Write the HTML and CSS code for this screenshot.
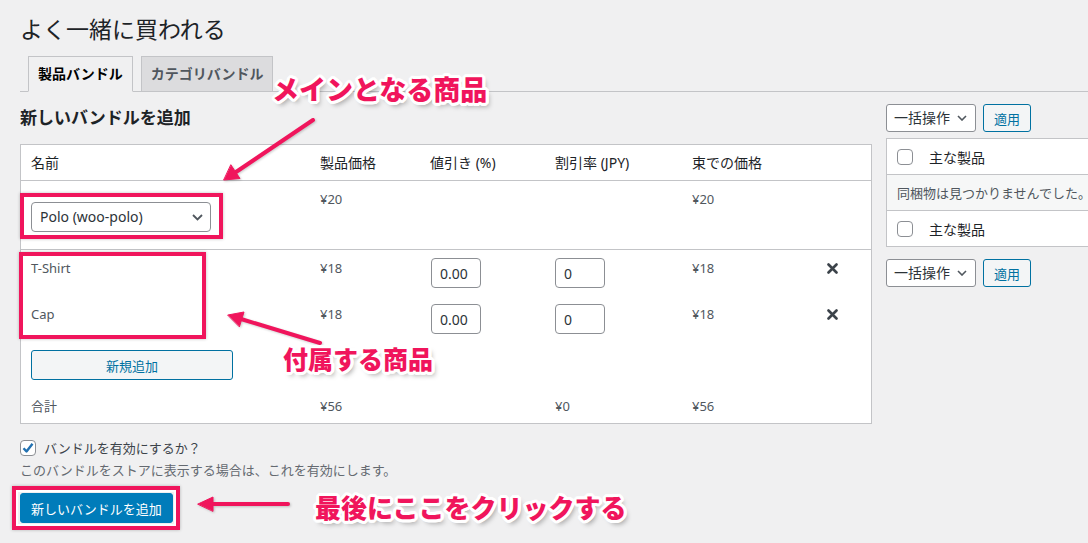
FILE: index.html
```html
<!DOCTYPE html>
<html lang="ja">
<head>
<meta charset="utf-8">
<title>よく一緒に買われる</title>
<link rel="stylesheet" href="styles.css">
</head>
<body>
<div class="page">
  <h1 class="title">よく一緒に買われる</h1>
  <nav class="tabs">
    <span class="tab active">製品バンドル</span>
    <span class="tab">カテゴリバンドル</span>
  </nav>
  <div class="cols">
    <div class="main">
      <h2 class="heading">新しいバンドルを追加</h2>
      <table class="bundle">
        <colgroup>
          <col class="c1"><col class="c2"><col class="c3"><col class="c4"><col class="c5"><col class="c6">
        </colgroup>
        <thead>
          <tr><th>名前</th><th>製品価格</th><th>値引き (%)</th><th>割引率 (JPY)</th><th>束での価格</th><th></th></tr>
        </thead>
        <tbody>
          <tr class="r-main">
            <td class="sel-cell"><div class="select"><span>Polo (woo-polo)</span><svg class="chev" width="11" height="7" viewBox="0 0 11 7"><path d="M1 1l4.5 4.5L10 1" fill="none" stroke="#50575e" stroke-width="1.8"/></svg></div></td>
            <td>¥20</td><td></td><td></td><td>¥20</td><td></td>
          </tr>
          <tr class="r-item">
            <td>T-Shirt</td><td>¥18</td>
            <td><input class="num n1" value="0.00"></td>
            <td><input class="num" value="0"></td>
            <td>¥18</td>
            <td><svg class="x" width="11" height="11" viewBox="0 0 11 11"><path d="M1.5 1.5l8 8M9.5 1.5l-8 8" stroke="#3c434a" stroke-width="2.6" stroke-linecap="round"/></svg></td>
          </tr>
          <tr class="r-item">
            <td>Cap</td><td>¥18</td>
            <td><input class="num n1" value="0.00"></td>
            <td><input class="num" value="0"></td>
            <td>¥18</td>
            <td><svg class="x" width="11" height="11" viewBox="0 0 11 11"><path d="M1.5 1.5l8 8M9.5 1.5l-8 8" stroke="#3c434a" stroke-width="2.6" stroke-linecap="round"/></svg></td>
          </tr>
          <tr class="r-add">
            <td colspan="6"><button class="btn-sec add">新規追加</button></td>
          </tr>
          <tr class="r-total">
            <td>合計</td><td>¥56</td><td></td><td>¥0</td><td>¥56</td><td></td>
          </tr>
        </tbody>
      </table>
      <label class="enable"><span class="cb"><svg width="14" height="14" viewBox="0 0 14 14"><path d="M2.5 7.2l3 3.2 6-7.6" fill="none" stroke="#2271b1" stroke-width="2.4" stroke-linejoin="round"/></svg></span>バンドルを有効にするか？</label>
      <p class="desc">このバンドルをストアに表示する場合は、これを有効にします。</p>
      <button class="primary">新しいバンドルを追加</button>
    </div>
    <div class="side">
      <div class="bulk">
        <div class="select small"><span>一括操作</span><svg class="chev" width="10" height="6" viewBox="0 0 10 6"><path d="M1 1l4 4 4-4" fill="none" stroke="#50575e" stroke-width="1.6"/></svg></div>
        <button class="btn-sec apply">適用</button>
      </div>
      <div class="list">
        <div class="lrow"><span class="cb empty"></span><span class="lbl">主な製品</span></div>
        <div class="lrow none">同梱物は見つかりませんでした。</div>
        <div class="lrow"><span class="cb empty"></span><span class="lbl">主な製品</span></div>
      </div>
      <div class="bulk bottom">
        <div class="select small"><span>一括操作</span><svg class="chev" width="10" height="6" viewBox="0 0 10 6"><path d="M1 1l4 4 4-4" fill="none" stroke="#50575e" stroke-width="1.6"/></svg></div>
        <button class="btn-sec apply">適用</button>
      </div>
    </div>
  </div>

  <div class="box b1"></div>
  <div class="box b2"></div>
  <div class="box b3"></div>
  <svg class="arrows" width="1088" height="543" viewBox="0 0 1088 543">
    <g fill="#f0155c" stroke="#f0155c" stroke-width="4" stroke-linecap="round">
      <line x1="313" y1="120" x2="236" y2="172"/>
      <polygon points="224,180 240,178.5 231,165" stroke-width="1" stroke-linejoin="round"/>
      <line x1="320" y1="343" x2="241" y2="319"/>
      <polygon points="228,315 244,312 239.5,326.5" stroke-width="1" stroke-linejoin="round"/>
      <line x1="288" y1="504" x2="211" y2="504"/>
      <polygon points="198,504 213,497 213,511" stroke-width="1" stroke-linejoin="round"/>
    </g>
  </svg>
  <div class="note n-main">メインとなる商品</div>
  <div class="note n-sub">付属する商品</div>
  <div class="note n-click">最後にここをクリックする</div>
</div>
</body>
</html>
```
FILE: styles.css
```css
body {
  margin: 0;
  background: #f0f0f1;
  font-family: "Noto Sans", "Noto Sans CJK JP", sans-serif;
  font-size: 13px;
  color: #3c434a;
}
.page {
  position: relative;
  height: 543px;
  overflow: hidden;
  padding-left: 20px;
}
.title {
  margin: 0;
  padding-top: 14px;
  font-size: 23px;
  line-height: 30px;
  font-weight: 400;
  color: #1d2327;
}
.tabs {
  display: flex;
  gap: 8px;
  margin-top: 12px;
  padding-left: 8px;
  border-bottom: 1px solid #c3c4c7;
}
.tab {
  border: 1px solid #c3c4c7;
  padding: 5px 9px;
  line-height: 24px;
  font-size: 14px;
  font-weight: 700;
  background: #dcdcde;
  color: #50575e;
  margin-bottom: -1px;
}
.tab.active {
  background: #f0f0f1;
  border-bottom-color: #f0f0f1;
  color: #000;
}
.cols {
  display: flex;
  gap: 14px;
  margin-top: 12px;
}
.main { width: 852px; flex: none; }
.side { width: 300px; flex: none; }
.heading {
  margin: 2px 0 14px;
  font-size: 17px;
  line-height: 24px;
  font-weight: 700;
  color: #1d2327;
}
.bundle {
  width: 852px;
  box-sizing: border-box;
  table-layout: fixed;
  border-collapse: separate;
  border-spacing: 0;
  border: 1px solid #c3c4c7;
  background: #fff;
}
.c1 { width: 289px; }
.c2 { width: 110px; }
.c3 { width: 125px; }
.c4 { width: 137px; }
.c5 { width: 135px; }
.c6 { width: 54px; }
.bundle th {
  text-align: left;
  font-weight: 400;
  font-size: 14px;
  line-height: 19px;
  padding: 8px 10px;
  color: #1d2327;
  border-bottom: 1px solid #c3c4c7;
}
.bundle td {
  vertical-align: top;
  padding: 8px 10px;
  line-height: 20px;
  color: #50575e;
}
.r-main td {
  border-bottom: 1px solid #c3c4c7;
  padding-bottom: 17px;
}
.r-main td.sel-cell { padding-bottom: 17px; }
.r-item td { line-height: 20px; height: 30px; }
.r-total td { padding-bottom: 7px; }
.select {
  display: flex;
  align-items: center;
  justify-content: space-between;
  box-sizing: border-box;
  width: 180px;
  height: 30px;
  margin-top: 13px;
  padding: 0 7px 0 8px;
  border: 1px solid #8c8f94;
  border-radius: 4px;
  background: #fff;
  font-size: 14px;
  line-height: 20px;
  color: #2c3338;
}
.select.small {
  width: 90px;
  height: 28px;
  margin-top: 0;
  padding: 0 8px 0 7px;
  border-radius: 3px;
}
.num {
  display: block;
  box-sizing: border-box;
  width: 50px;
  height: 30px;
  padding: 0 8px;
  border: 1px solid #8c8f94;
  border-radius: 4px;
  background: #fff;
  font-family: inherit;
  font-size: 14px;
  color: #2c3338;
}
.num.n1 { margin-left: 1px; }
.x { display: block; margin-top: 5px; }
.btn-sec {
  box-sizing: border-box;
  border: 1px solid #0071a1;
  background: #f3f5f6;
  color: #0071a1;
  border-radius: 3px;
  font-family: inherit;
  font-size: 13px;
  padding: 0;
}
.add { display: block; width: 202px; height: 30px; }
.apply { width: 48px; height: 28px; }
.enable {
  display: flex;
  align-items: center;
  gap: 8px;
  height: 16px;
  margin-top: 16px;
  line-height: 16px;
  color: #3c434a;
}
.cb {
  display: inline-flex;
  align-items: center;
  justify-content: center;
  flex: none;
  box-sizing: border-box;
  width: 16px;
  height: 16px;
  border: 1px solid #8c8f94;
  border-radius: 4px;
  background: #fff;
}
.desc {
  margin: 4px 0 0;
  line-height: 20px;
  color: #646970;
}
.primary {
  display: block;
  box-sizing: border-box;
  height: 30px;
  margin-top: 13px;
  padding: 0 10px;
  border: 1px solid #007cba;
  border-radius: 3px;
  background: #007cba;
  color: #fff;
  font-family: inherit;
  font-size: 13px;
}
.bulk {
  display: flex;
  gap: 7px;
  align-items: center;
}
.bulk.bottom { margin-top: 12px; }
.list {
  margin-top: 6px;
  border: 1px solid #c3c4c7;
  background: #fff;
}
.lrow {
  display: flex;
  align-items: center;
  height: 35px;
  padding-left: 10px;
  font-size: 14px;
  color: #1d2327;
}
.lrow + .lrow { border-top: 1px solid #c3c4c7; }
.lrow .lbl { margin-left: 16px; }
.lrow.none {
  background: #f6f7f7;
  font-size: 13px;
  color: #50575e;
  white-space: nowrap;
}

/* annotations */
.box {
  position: absolute;
  box-sizing: border-box;
  border: 4px solid #f0155c;
  box-shadow: inset 0 0 0 2px #fff, 0 0 3px rgba(0,0,0,.25);
}
.b1 { left: 20px; top: 193px; width: 203px; height: 46px; }
.b2 { left: 19px; top: 252px; width: 187px; height: 87px; }
.b3 { left: 12px; top: 486px; width: 168px; height: 44px; }
.arrows {
  position: absolute;
  left: 0;
  top: 0;
  pointer-events: none;
  filter: drop-shadow(1px 1px 1px rgba(0,0,0,.2));
}
.note {
  position: absolute;
  white-space: nowrap;
  font-family: "Noto Sans CJK JP", sans-serif;
  font-weight: 900;
  line-height: 1;
  color: #f0155c;
  text-shadow:
    3px 0 0 #fff, -3px 0 0 #fff, 0 3px 0 #fff, 0 -3px 0 #fff,
    2px 2px 0 #fff, -2px 2px 0 #fff, 2px -2px 0 #fff, -2px -2px 0 #fff,
    3px 1px 0 #fff, -3px 1px 0 #fff, 3px -1px 0 #fff, -3px -1px 0 #fff,
    1px 3px 0 #fff, -1px 3px 0 #fff, 1px -3px 0 #fff, -1px -3px 0 #fff,
    3px 4px 5px rgba(0,0,0,.35);
}
.n-main { left: 272px; top: 75px; font-size: 27px; }
.n-sub { left: 283px; top: 346px; font-size: 25px; }
.n-click { left: 315px; top: 494px; font-size: 26px; }
```
